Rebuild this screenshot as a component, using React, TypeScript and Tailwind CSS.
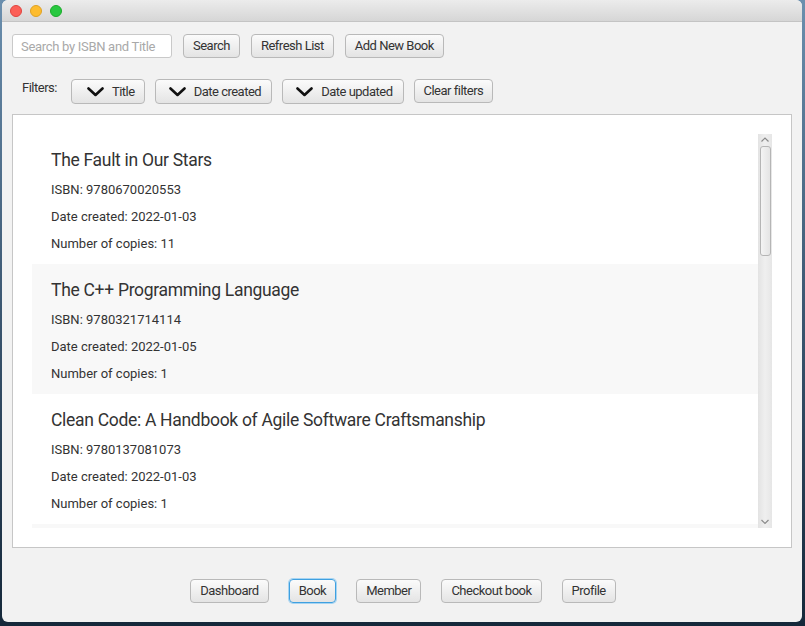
import { useState } from 'react';

const btnBase =
  'h-[24px] px-[9px] flex items-center rounded-[4px] border bg-gradient-to-b from-[#fbfbfb] to-[#e4e4e4] text-[13px] text-[#333] tracking-[-0.5px]';
const btn = btnBase + ' border-[#b9b9b9]';
const btnFocus = btnBase + ' border-[#3fa0e0] shadow-[0_0_0_1px_#a6d4f2]';

const books = [
  { title: 'The Fault in Our Stars', isbn: '9780670020553', created: '2022-01-03', copies: 11 },
  { title: 'The C++ Programming Language', isbn: '9780321714114', created: '2022-01-05', copies: 1 },
  { title: 'Clean Code: A Handbook of Agile Software Craftsmanship', isbn: '9780137081073', created: '2022-01-03', copies: 1 },
  { title: 'Design Patterns', isbn: '9780201633610', created: '2022-01-04', copies: 2 },
];

function Chevron() {
  return (
    <svg width="17" height="10" viewBox="0 0 17 10" className="mr-[8px]">
      <path d="M1.5 1.5 L8.5 8 L15.5 1.5" fill="none" stroke="#111" strokeWidth="2.6" strokeLinecap="round" strokeLinejoin="round" />
    </svg>
  );
}

export default function App() {
  const [query, setQuery] = useState('');
  const [active, setActive] = useState('Book');

  return (
    <div
      className="w-[805px] h-[626px] overflow-hidden bg-gradient-to-b from-[#6b8fae] via-[#3b5670] to-[#15283a] pl-[2px]"
      style={{ fontFamily: 'Roboto, "Noto Sans", sans-serif' }}
    >
      <div className="w-[800px] h-[622px] rounded-[6px] overflow-hidden bg-[#f2f2f2] flex flex-col">
        {/* title bar */}
        <div className="h-[22px] shrink-0 bg-gradient-to-b from-[#ececec] to-[#d6d6d6] border-b border-[#c4c4c4] flex items-center pl-[8px] gap-[8px]">
          <span className="w-[12px] h-[12px] rounded-full bg-[#fc5f57] border border-[#e0443e]" />
          <span className="w-[12px] h-[12px] rounded-full bg-[#fdbc2e] border border-[#dea123]" />
          <span className="w-[12px] h-[12px] rounded-full bg-[#28c840] border border-[#1aab29]" />
        </div>

        {/* search row */}
        <div className="flex items-center gap-[11px] pl-[10px] mt-[12px] shrink-0">
          <input
            value={query}
            onChange={e => setQuery(e.target.value)}
            placeholder="Search by ISBN and Title"
            className="w-[160px] h-[24px] rounded-[3px] border border-[#c9c9c9] bg-white px-[8px] text-[13px] tracking-[-0.3px] text-[#333] placeholder:text-[#a9a9a9] outline-none"
          />
          <button className={btn}>Search</button>
          <button className={btn}>Refresh List</button>
          <button className={btn}>Add New Book</button>
        </div>

        {/* filters row */}
        <div className="flex items-center pl-[20px] mt-[21px] shrink-0">
          <span className="text-[13px] tracking-[-0.5px] text-[#333] mr-[14px] -mt-[8px]">Filters:</span>
          <div className="flex items-center gap-[10px]">
            <button className={btn + ' h-[25px] pl-[15px] pr-[9px]'}><Chevron />Title</button>
            <button className={btn + ' h-[25px] pl-[13px] pr-[10px]'}><Chevron />Date created</button>
            <button className={btn + ' h-[25px] pl-[13px] pr-[10px]'}><Chevron />Date updated</button>
            <button className={btn + ' -mt-[1px]'}>Clear filters</button>
          </div>
        </div>

        {/* list */}
        <div className="mt-[10px] ml-[10px] w-[780px] h-[434px] shrink-0 border border-[#c6c6c6] bg-white pt-[19px] pl-[19px] pr-[18px] flex">
          <div className="w-[726px] h-[394px] overflow-hidden">
            {books.map((b, i) => (
              <div key={b.isbn} className={'h-[130px] pl-[19px] pt-[13px] ' + (i % 2 === 1 ? 'bg-[#f8f8f8]' : 'bg-white')}>
                <div className="text-[17.5px] leading-[26px] text-[#333] tracking-[-0.3px]">{b.title}</div>
                <div className="mt-[6px] flex flex-col gap-[5px] text-[13px] leading-[22px] text-[#333]">
                  <span>ISBN: {b.isbn}</span>
                  <span>Date created: {b.created}</span>
                  <span>Number of copies: {b.copies}</span>
                </div>
              </div>
            ))}
          </div>
          {/* scrollbar */}
          <div className="w-[14px] h-[394px] bg-gradient-to-r from-[#e3e3e3] via-[#efefef] to-[#e6e6e6] flex flex-col items-center">
            <svg width="10" height="12" viewBox="0 0 10 12" className="shrink-0">
              <path d="M1.5 7.5 L5 4 L8.5 7.5" fill="none" stroke="#8a8a8a" strokeWidth="1.2" />
            </svg>
            <div className="w-[11px] h-[110px] rounded-[3px] border border-[#b5b5b5] bg-gradient-to-r from-[#f4f4f4] to-[#e4e4e4]" />
            <div className="flex-1" />
            <svg width="10" height="12" viewBox="0 0 10 12" className="shrink-0">
              <path d="M1.5 4 L5 7.5 L8.5 4" fill="none" stroke="#8a8a8a" strokeWidth="1.2" />
            </svg>
          </div>
        </div>

        {/* bottom nav */}
        <div className="flex items-center justify-center gap-[20px] mt-[31px] pl-[2px] shrink-0">
          {['Dashboard', 'Book', 'Member', 'Checkout book', 'Profile'].map(n => (
            <button key={n} onClick={() => setActive(n)} className={active === n ? btnFocus : btn}>
              {n}
            </button>
          ))}
        </div>
      </div>
    </div>
  );
}
